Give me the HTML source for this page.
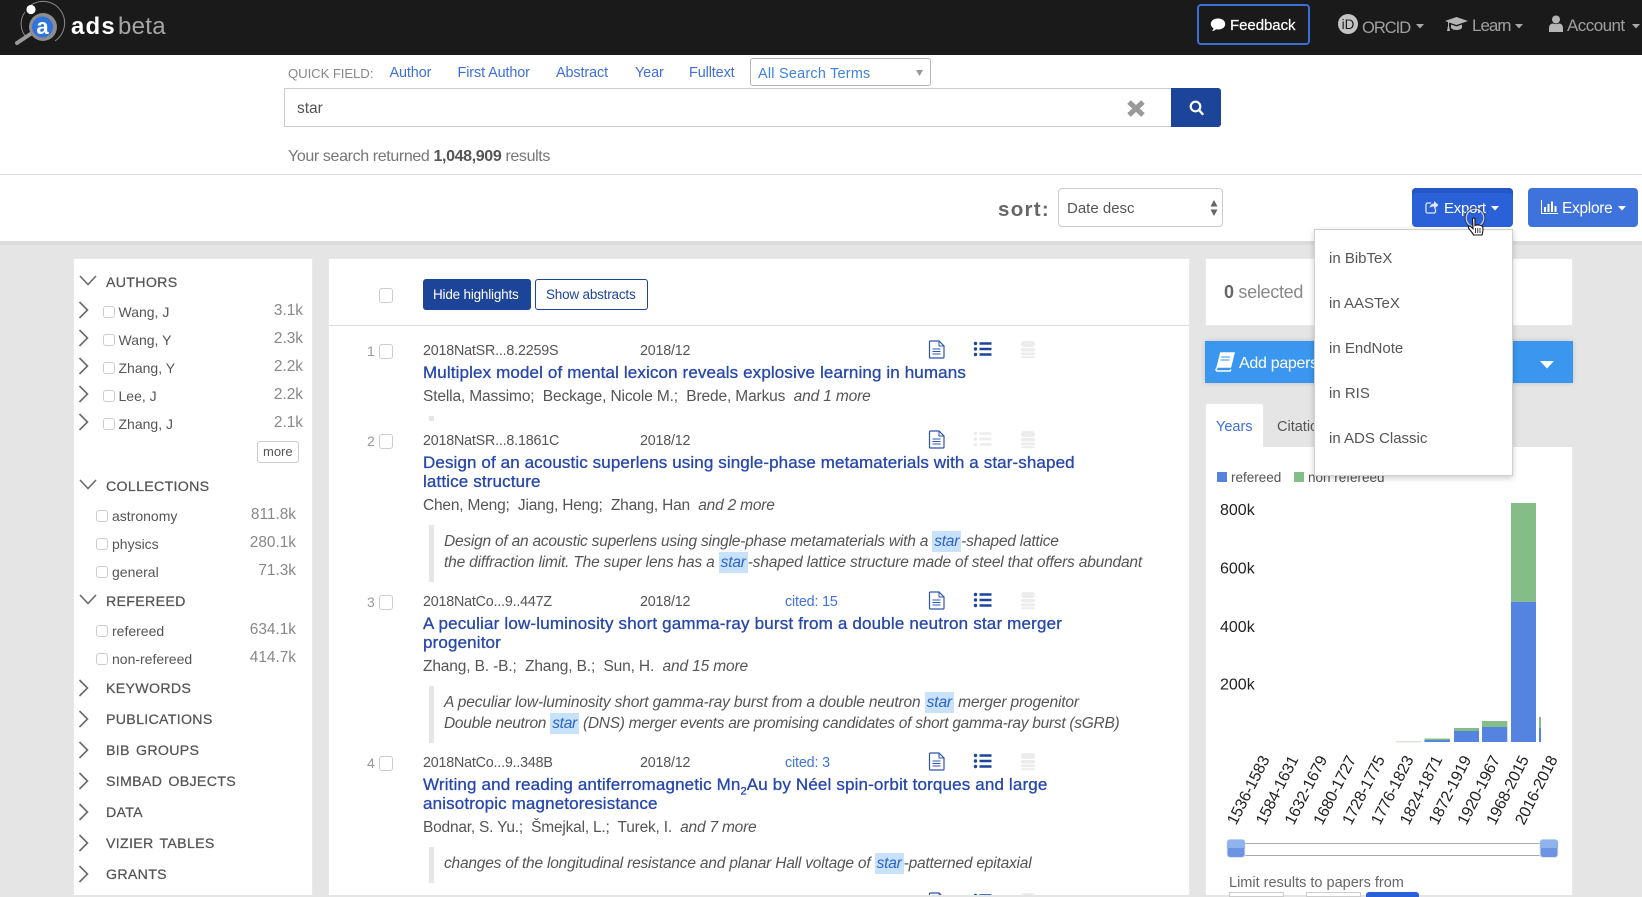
<!DOCTYPE html>
<html lang="en"><head><meta charset="utf-8"><title>ads beta</title>
<style>
html,body{margin:0;padding:0}
body{width:1642px;height:895px;overflow:hidden;position:relative;background:#e5e5e5;font-family:"Liberation Sans",Arial,sans-serif;color:#555;font-size:15px}
.b,.t,svg.a{position:absolute}
.b{box-sizing:border-box}
.t{white-space:nowrap;line-height:20px}
.cb{position:absolute;box-sizing:border-box;width:12px;height:12px;border:1px solid #ccc;border-radius:3px;background:#fff}
.cm{width:14px;height:15px}
.h{color:#555;font-size:14.2px;letter-spacing:.3px;word-spacing:2px;-webkit-text-stroke:.25px #555}
.n{color:#555;font-size:14px}
.c{color:#888;font-size:15.4px;text-align:right}
.id{font-size:14.3px;letter-spacing:-.2px;color:#555}
.ti{font-size:17px;color:#2647ab;letter-spacing:.14px;-webkit-text-stroke:.3px #2647ab}
.au{font-size:15.5px;color:#555;letter-spacing:-.14px}
.ab{font-size:15.5px;color:#555;font-style:italic;letter-spacing:-.22px;line-height:21px}
.hl{display:inline-block;line-height:20px;padding:1px 2px 0;background:#c8e3f9;color:#2d62c8}
.bar{position:absolute;left:429px;width:5px;background:#e6e6e6}
.cit{font-size:14.3px;color:#3f73d8;letter-spacing:-.15px}
.q{font-size:14.4px;color:#3d6fd8;letter-spacing:-.1px}
.dd{font-size:15px;color:#555;left:1329px}
</style></head><body>

<!-- top bar -->
<div class="b" style="left:0;top:0;width:1642px;height:55px;background:#1a1a1a"></div>
<svg class="a" style="left:0;top:0" width="70" height="55" viewBox="0 0 70 55">
<path d="M31 5A20 20 0 0 1 55 41" fill="none" stroke="#8a8a8a" stroke-width="1"/>
<path d="M27 38A20 20 0 0 1 25 12" fill="none" stroke="#8a8a8a" stroke-width="1"/>
<line x1="17" y1="43" x2="32" y2="33" stroke="#9a9a9a" stroke-width="4" stroke-linecap="round"/>
<circle cx="43" cy="27" r="14" fill="#8d8d8d"/>
<circle cx="42.5" cy="27" r="10.5" fill="#2f73dc"/>
<circle cx="31" cy="9.5" r="4.6" fill="#fff"/>
<text x="42.5" y="34" font-family="Liberation Sans" font-weight="700" font-size="22" fill="#fff" text-anchor="middle">a</text>
</svg>
<div class="t" style="left:71px;top:12px;font-size:24px;line-height:30px;color:#fff;font-weight:700;letter-spacing:1.2px">ads</div>
<div class="t" style="left:118px;top:12px;font-size:24px;line-height:30px;color:#a6a6a6;letter-spacing:.3px">beta</div>

<div class="b" style="left:1197px;top:4px;width:113px;height:41px;border:2px solid #3a6fd8;border-radius:4px"></div>
<svg class="a" style="left:1210px;top:17px" width="16" height="16" viewBox="0 0 16 16"><path d="M8 1.5C3.8 1.5.8 3.8.8 7c0 1.9 1.1 3.4 2.7 4.400-.2 1-.8 2-1.5 2.800 1.600-.2 3-.9 4-1.900.6.1 1.300.2 2 .2 4.200 0 7.200-2.300 7.200-5.500S12.200 1.500 8 1.500z" fill="#fff"/></svg>
<div class="t" style="left:1230px;top:16px;font-size:15px;color:#fff;-webkit-text-stroke:.2px #fff;letter-spacing:-.05px">Feedback</div>

<svg class="a" style="left:1338px;top:14px" width="20" height="20" viewBox="0 0 20 20"><circle cx="10" cy="10" r="10" fill="#c4c4c4"/><text x="10" y="15" font-family="Liberation Sans" font-size="13.5" fill="#1a1a1a" text-anchor="middle">iD</text></svg>
<div class="t" style="left:1362px;top:18px;font-size:16.5px;color:#a0a0a0;letter-spacing:-1px">ORCID</div>
<svg class="a" style="left:1416px;top:24px" width="8" height="5"><path d="M0 0h8L4 4.5z" fill="#a8a8a8"/></svg>
<svg class="a" style="left:1445px;top:16px" width="23" height="17" viewBox="0 0 23 17"><path d="M11.5 1 23 5 11.5 9 4 6.5V10l1 5H2l1-5V6L0 5zM6 8.500l5.500 2 5.500-2V12c-1.500 1.500-3.500 2-5.500 2S7.500 13.500 6 12z" fill="#b5b5b5"/></svg>
<div class="t" style="left:1472px;top:16px;font-size:17px;color:#a0a0a0;letter-spacing:-1px">Learn</div>
<svg class="a" style="left:1515px;top:24px" width="8" height="5"><path d="M0 0h8L4 4.5z" fill="#a8a8a8"/></svg>
<svg class="a" style="left:1549px;top:15px" width="14" height="17" viewBox="0 0 14 17"><circle cx="7" cy="4.5" r="4" fill="#b5b5b5"/><path d="M0 17v-4c0-3 2-4.500 4-4.500 1 .8 5 .8 6 0 2 0 4 1.500 4 4.500v4z" fill="#b5b5b5"/></svg>
<div class="t" style="left:1567px;top:16px;font-size:17px;color:#a0a0a0;letter-spacing:-.55px">Account</div>
<svg class="a" style="left:1632px;top:24px" width="8" height="5"><path d="M0 0h8L4 4.5z" fill="#a8a8a8"/></svg>

<!-- search area -->
<div class="b" style="left:0;top:55px;width:1642px;height:186px;background:#fff"></div>
<div class="b" style="left:0;top:174px;width:1642px;height:1px;background:#ddd"></div>
<div class="b" style="left:0;top:241px;width:1642px;height:4px;background:#dcdcdc"></div>

<div class="t" style="left:288px;top:64px;font-size:13.2px;color:#888;letter-spacing:-.1px">QUICK FIELD:</div>
<div class="t q" style="left:389.5px;top:63px">Author</div>
<div class="t q" style="left:457.5px;top:63px">First Author</div>
<div class="t q" style="left:556px;top:63px">Abstract</div>
<div class="t q" style="left:635px;top:63px">Year</div>
<div class="t q" style="left:689px;top:63px">Fulltext</div>
<div class="b" style="left:750px;top:58px;width:181px;height:28px;border:1px solid #b5b5b5;border-radius:3px;background:#fff"></div>
<div class="t" style="left:758px;top:64px;font-size:14.4px;color:#3d82e0;letter-spacing:.25px">All Search Terms</div>
<svg class="a" style="left:916px;top:70px" width="7" height="6"><path d="M0 0h7L3.5 6z" fill="#999"/></svg>

<div class="b" style="left:284px;top:88px;width:888px;height:39px;border:1px solid #ccc;background:#fff"></div>
<div class="t" style="left:297px;top:99px;font-size:15.5px;color:#555">star</div>
<svg class="a" style="left:1126px;top:99px" width="20" height="19" viewBox="0 0 20 19"><path d="M3 3l14 13M17 3 3 16" stroke="#999" stroke-width="5"/></svg>
<div class="b" style="left:1171px;top:88px;width:50px;height:39px;background:#1c4599;border-radius:0 3px 3px 0"></div>
<svg class="a" style="left:1189px;top:100px" width="15" height="16" viewBox="0 0 15 16"><circle cx="6.5" cy="6.5" r="4.8" fill="none" stroke="#fff" stroke-width="2.2"/><path d="M10 10l3.500 4" stroke="#fff" stroke-width="2.4" stroke-linecap="round"/></svg>

<div class="t" style="left:288px;top:146.5px;font-size:16px;color:#777;letter-spacing:-.37px">Your search returned <b style="color:#555">1,048,909</b> results</div>

<div class="t" style="left:998px;top:199.5px;font-size:20.5px;font-weight:700;color:#666;letter-spacing:1.3px">sort:</div>
<div class="b" style="left:1058px;top:188px;width:165px;height:39px;border:1px solid #ccc;border-radius:4px;background:#fff"></div>
<div class="t" style="left:1067px;top:199px;font-size:15px;color:#555">Date desc</div>
<svg class="a" style="left:1210px;top:200px" width="8" height="16"><path d="M4 0l3.500 6.500h-7zM4 16 .5 9.500h7z" fill="#666"/></svg>

<div class="b" style="left:1412px;top:188px;width:101px;height:39px;background:#2a60d8;border-radius:4px;box-shadow:inset 0 5px 0 #2657c6"></div>
<svg class="a" style="left:1425px;top:200px" width="14" height="14" viewBox="0 0 14 14"><path d="M10.5 8.500v3a1.500 1.500 0 0 1-1.500 1.500H2.500A1.500 1.500 0 0 1 1 11.500V4.500A1.500 1.500 0 0 1 2.500 3H6" fill="none" stroke="#dfe8fb" stroke-width="1.3"/><path d="M4.500 8C5 5 7 3.500 9 3.500V1l4.500 4L9 9V6.500C7 6.500 5.500 7 4.500 8z" fill="#dfe8fb"/></svg>
<div class="t" style="left:1444px;top:199px;font-size:15px;color:#fff;letter-spacing:-.25px">Export</div>
<svg class="a" style="left:1491px;top:206px" width="8" height="5"><path d="M0 0h8L4 4.5z" fill="#fff"/></svg>

<div class="b" style="left:1528px;top:188px;width:110px;height:39px;background:#3f73dc;border-radius:4px"></div>
<svg class="a" style="left:1541px;top:200px" width="17" height="14" viewBox="0 0 17 14"><path d="M.5 0v13.500H17" fill="none" stroke="#fff" stroke-width="1"/><path d="M3 7h2v5H3zM6.500 4h2v8h-2zM10 1.500h2V12h-2zM13.500 6h2v6h-2z" fill="#fff"/></svg>
<div class="t" style="left:1562px;top:199px;font-size:15.4px;color:#fff;letter-spacing:-.25px">Explore</div>
<svg class="a" style="left:1618px;top:206px" width="8" height="5"><path d="M0 0h8L4 4.5z" fill="#fff"/></svg>

<!-- left panel -->
<div class="b" style="left:73px;top:258px;width:240px;height:637px;background:#fff;border:1px solid #e8e8e8;border-bottom:0"></div>
<svg class="a" style="left:0;top:0" width="100" height="895" viewBox="0 0 100 895" fill="none" stroke="#6a6a6a" stroke-width="1.6">
<path d="M80 276l8 8.500 8-8.500M80 480l8 8.500 8-8.500M80 595l8 8.500 8-8.500"/>
<path d="M79.500 302l8 8-8 8M79.500 330l8 8-8 8M79.500 358l8 8-8 8M79.500 386l8 8-8 8M79.500 414l8 8-8 8"/>
<path d="M79.500 680l8 8-8 8M79.500 711l8 8-8 8M79.500 742l8 8-8 8M79.500 773l8 8-8 8M79.500 804l8 8-8 8M79.500 835l8 8-8 8M79.500 866l8 8-8 8"/>
</svg>

<div class="t h" style="left:106px;top:273px">AUTHORS</div>
<div class="cb" style="left:103px;top:306px"></div><div class="t n" style="left:118.5px;top:302px">Wang, J</div><div class="t c" style="right:1339px;top:301px">3.1k</div>
<div class="cb" style="left:103px;top:334px"></div><div class="t n" style="left:118.5px;top:330px">Wang, Y</div><div class="t c" style="right:1339px;top:329px">2.3k</div>
<div class="cb" style="left:103px;top:362px"></div><div class="t n" style="left:118.5px;top:358px">Zhang, Y</div><div class="t c" style="right:1339px;top:357px">2.2k</div>
<div class="cb" style="left:103px;top:390px"></div><div class="t n" style="left:118.5px;top:386px">Lee, J</div><div class="t c" style="right:1339px;top:385px">2.2k</div>
<div class="cb" style="left:103px;top:418px"></div><div class="t n" style="left:118.5px;top:414px">Zhang, J</div><div class="t c" style="right:1339px;top:413px">2.1k</div>
<div class="b" style="left:257px;top:441px;width:42px;height:22px;border:1px solid #ccc;border-radius:3px;background:#fff"></div>
<div class="t" style="left:263px;top:442px;font-size:13px;color:#555">more</div>

<div class="t h" style="left:106px;top:477px">COLLECTIONS</div>
<div class="cb" style="left:96px;top:510px"></div><div class="t n" style="left:112px;top:506px">astronomy</div><div class="t c" style="right:1346px;top:505px">811.8k</div>
<div class="cb" style="left:96px;top:538px"></div><div class="t n" style="left:112px;top:534px">physics</div><div class="t c" style="right:1346px;top:533px">280.1k</div>
<div class="cb" style="left:96px;top:566px"></div><div class="t n" style="left:112px;top:562px">general</div><div class="t c" style="right:1346px;top:561px">71.3k</div>

<div class="t h" style="left:106px;top:592px">REFEREED</div>
<div class="cb" style="left:96px;top:625px"></div><div class="t n" style="left:112px;top:621px">refereed</div><div class="t c" style="right:1346px;top:620px">634.1k</div>
<div class="cb" style="left:96px;top:653px"></div><div class="t n" style="left:112px;top:649px">non-refereed</div><div class="t c" style="right:1346px;top:648px">414.7k</div>

<div class="t h" style="left:106px;top:679px">KEYWORDS</div>
<div class="t h" style="left:106px;top:710px">PUBLICATIONS</div>
<div class="t h" style="left:106px;top:741px">BIB GROUPS</div>
<div class="t h" style="left:106px;top:772px">SIMBAD OBJECTS</div>
<div class="t h" style="left:106px;top:803px">DATA</div>
<div class="t h" style="left:106px;top:834px">VIZIER TABLES</div>
<div class="t h" style="left:106px;top:865px">GRANTS</div>

<!-- middle panel -->
<div class="b" style="left:328px;top:258px;width:862px;height:637px;background:#fff;border:1px solid #e8e8e8;border-bottom:0"></div>
<div class="b" style="left:329px;top:325px;width:860px;height:1px;background:#ddd"></div>
<div class="cb cm" style="left:379px;top:288px"></div>
<div class="b" style="left:423px;top:279px;width:108px;height:31px;background:#1c4599;border-radius:3px"></div>
<div class="t" style="left:433px;top:285px;font-size:13.5px;color:#fff;letter-spacing:-.2px">Hide highlights</div>
<div class="b" style="left:535px;top:279px;width:113px;height:31px;border:1px solid #1c4599;border-radius:3px;background:#fff"></div>
<div class="t" style="left:546px;top:285px;font-size:13.5px;color:#1c4599;letter-spacing:-.2px">Show abstracts</div>

<!-- row 1 -->
<div class="t" style="left:367px;top:341px;font-size:14px;color:#999">1</div><div class="cb cm" style="left:379px;top:344px"></div>
<div class="t id" style="left:423px;top:341px">2018NatSR...8.2259S</div>
<div class="t id" style="left:640px;top:341px">2018/12</div>
<div class="t ti" style="left:423px;top:363px;letter-spacing:.13px">Multiplex model of mental lexicon reveals explosive learning in humans</div>
<div class="t au" style="left:423px;top:387px">Stella, Massimo;&nbsp; Beckage, Nicole M.;&nbsp; Brede, Markus &nbsp;<i>and 1 more</i></div>
<div class="b" style="left:429px;top:416px;width:5px;height:5px;background:#e6e6e6"></div>

<!-- row 2 -->
<div class="t" style="left:367px;top:431px;font-size:14px;color:#999">2</div><div class="cb cm" style="left:379px;top:434px"></div>
<div class="t id" style="left:423px;top:431px">2018NatSR...8.1861C</div>
<div class="t id" style="left:640px;top:431px">2018/12</div>
<div class="t ti" style="left:423px;top:453px;letter-spacing:.11px">Design of an acoustic superlens using single-phase metamaterials with a star-shaped</div>
<div class="t ti" style="left:423px;top:472px">lattice structure</div>
<div class="t au" style="left:423px;top:496px;letter-spacing:-.19px">Chen, Meng;&nbsp; Jiang, Heng;&nbsp; Zhang, Han &nbsp;<i>and 2 more</i></div>
<div class="bar" style="top:525px;height:57px"></div>
<div class="t ab" style="left:444px;top:531px">Design of an acoustic superlens using single-phase metamaterials with a <span class="hl">star</span>-shaped lattice</div>
<div class="t ab" style="left:444px;top:552px;letter-spacing:-.18px">the diffraction limit. The super lens has a <span class="hl">star</span>-shaped lattice structure made of steel that offers abundant</div>

<!-- row 3 -->
<div class="t" style="left:367px;top:592px;font-size:14px;color:#999">3</div><div class="cb cm" style="left:379px;top:595px"></div>
<div class="t id" style="left:423px;top:592px">2018NatCo...9..447Z</div>
<div class="t id" style="left:640px;top:592px">2018/12</div>
<div class="t cit" style="left:785px;top:592px">cited: 15</div>
<div class="t ti" style="left:423px;top:614px;letter-spacing:.18px">A peculiar low-luminosity short gamma-ray burst from a double neutron star merger</div>
<div class="t ti" style="left:423px;top:633px">progenitor</div>
<div class="t au" style="left:423px;top:657px">Zhang, B. -B.;&nbsp; Zhang, B.;&nbsp; Sun, H. &nbsp;<i>and 15 more</i></div>
<div class="bar" style="top:686px;height:57px"></div>
<div class="t ab" style="left:444px;top:692px;letter-spacing:-.14px">A peculiar low-luminosity short gamma-ray burst from a double neutron <span class="hl">star</span> merger progenitor</div>
<div class="t ab" style="left:444px;top:713px;letter-spacing:-.275px">Double neutron <span class="hl">star</span> (DNS) merger events are promising candidates of short gamma-ray burst (sGRB)</div>

<!-- row 4 -->
<div class="t" style="left:367px;top:753px;font-size:14px;color:#999">4</div><div class="cb cm" style="left:379px;top:756px"></div>
<div class="t id" style="left:423px;top:753px">2018NatCo...9..348B</div>
<div class="t id" style="left:640px;top:753px">2018/12</div>
<div class="t cit" style="left:785px;top:753px">cited: 3</div>
<div class="t ti" style="left:423px;top:775px;letter-spacing:.15px">Writing and reading antiferromagnetic Mn<sub style="font-size:11px;line-height:0">2</sub>Au by Néel spin-orbit torques and large</div>
<div class="t ti" style="left:423px;top:794px">anisotropic magnetoresistance</div>
<div class="t au" style="left:423px;top:818px;letter-spacing:-.21px">Bodnar, S. Yu.;&nbsp; Šmejkal, L.;&nbsp; Turek, I. &nbsp;<i>and 7 more</i></div>
<div class="bar" style="top:847px;height:36px"></div>
<div class="t ab" style="left:444px;top:853px;letter-spacing:-.2px">changes of the longitudinal resistance and planar Hall voltage of <span class="hl">star</span>-patterned epitaxial</div>

<!-- result icons -->
<svg class="a" style="left:920px;top:330px" width="125" height="565" viewBox="0 0 125 565">
<defs>
<g id="doc"><path d="M10.5 11h8.500l5 5V27a1 1 0 0 1-1 1H10.500a1 1 0 0 1-1-1V12a1 1 0 0 1 1-1z" fill="#fff" stroke="#2f55ae" stroke-width="1.2"/><path d="M19 11v5h5" fill="none" stroke="#2f55ae" stroke-width="1"/><path d="M12.500 19h8M12.500 21.500h8M12.500 24h8" stroke="#2f55ae" stroke-width="1"/></g>
<g id="lst"><path d="M59.500 13.500h12M59.500 19h12M59.500 24.500h12" stroke-width="2.6" fill="none"/><circle cx="55.500" cy="13.500" r="1.7" stroke="none"/><circle cx="55.500" cy="19" r="1.7" stroke="none"/><circle cx="55.500" cy="24.500" r="1.7" stroke="none"/></g>
<g id="db" fill="#ececec"><rect x="101" y="11" width="14" height="6" rx="3"/><rect x="101" y="18" width="14" height="3.5" rx="1.7"/><rect x="101" y="22.500" width="14" height="2.8" rx="1.4"/><rect x="101" y="26.200" width="14" height="2" rx="1"/></g>
</defs>
<use href="#doc"/><use href="#lst" fill="#1c4599" stroke="#1c4599"/><use href="#db"/>
<use href="#doc" y="90"/><use href="#lst" y="90" fill="#ececec" stroke="#ececec"/><use href="#db" y="90"/>
<use href="#doc" y="251"/><use href="#lst" y="251" fill="#1c4599" stroke="#1c4599"/><use href="#db" y="251"/>
<use href="#doc" y="412"/><use href="#lst" y="412" fill="#1c4599" stroke="#1c4599"/><use href="#db" y="412"/>
<use href="#doc" y="552"/><use href="#lst" y="552" fill="#1c4599" stroke="#1c4599"/><use href="#db" y="552"/>
</svg>

<!-- right column -->
<div class="b" style="left:1205px;top:258px;width:368px;height:68px;background:#fff;border:1px solid #e8e8e8"></div>
<div class="t" style="left:1224px;top:282px;font-size:18px;color:#888;letter-spacing:-.3px"><b style="color:#666">0</b> selected</div>

<div class="b" style="left:1205px;top:341px;width:368px;height:42px;background:#3a96ee;box-shadow:0 0 5px rgba(0,0,0,.15)"></div>
<svg class="a" style="left:1215px;top:352px" width="20" height="20" viewBox="0 0 20 20"><path d="M5 1h14l-3.500 14H2.500L1 17.500c0 1 .8 1.500 1.500 1.500H15l1-1.500" fill="none" stroke="#fff" stroke-width="1.5"/><path d="M5 1h14l-3.500 14H1.500z" fill="#fff"/><path d="M6 5h9M5.500 8h9" stroke="#3a96ee" stroke-width="1"/></svg>
<div class="t" style="left:1239px;top:354px;font-size:16px;color:#fff;letter-spacing:-.3px">Add papers</div>
<svg class="a" style="left:1540px;top:361px" width="14" height="8"><path d="M0 0h14L7 7.500z" fill="#fff"/></svg>

<div class="b" style="left:1205px;top:447px;width:368px;height:448px;background:#fff;border:1px solid #e8e8e8;border-bottom:0;border-top:0"></div>
<div class="b" style="left:1205px;top:403px;width:59px;height:44px;background:#fff;border:1px solid #e8e8e8;border-bottom:0;border-radius:3px 3px 0 0"></div>
<div class="t" style="left:1216px;top:417px;font-size:14.5px;color:#3d6fd8">Years</div>
<div class="t" style="left:1277px;top:417px;font-size:14.5px;color:#555">Citations</div>

<div class="b" style="left:1217px;top:472px;width:10px;height:10px;background:#5583e0"></div>
<div class="t" style="left:1231px;top:468px;font-size:13.5px;color:#555">refereed</div>
<div class="b" style="left:1294px;top:472px;width:10px;height:10px;background:#85bd88"></div>
<div class="t" style="left:1308px;top:468px;font-size:13.5px;color:#555">non refereed</div>

<svg class="a" style="left:1205px;top:480px" width="368" height="415" viewBox="1205 480 368 415" font-family="Liberation Sans">
<g font-size="16" fill="#222"><text x="1220" y="515">800k</text><text x="1220" y="573.5">600k</text><text x="1220" y="632">400k</text><text x="1220" y="689.5">200k</text></g>
<g fill="#5583e0"><rect x="1511" y="601.7" width="25" height="140.3"/><rect x="1482" y="727" width="25.3" height="15"/><rect x="1454" y="731" width="25" height="11"/><rect x="1424.5" y="740" width="25.5" height="2"/><rect x="1539" y="728" width="2" height="14"/></g>
<g fill="#85bd88"><rect x="1511" y="503" width="25" height="98.7"/><rect x="1482" y="721" width="25.3" height="6"/><rect x="1454" y="728" width="25" height="3"/><rect x="1424.5" y="738.5" width="25.5" height="1.5"/><rect x="1539" y="717" width="2" height="11"/><rect x="1396" y="741.3" width="25" height="1" opacity=".5"/></g>
<g font-size="16" fill="#222" text-anchor="end" letter-spacing="-.2">
<text transform="translate(1265.5 757) rotate(-63)" dy="5">1536-1583</text>
<text transform="translate(1294.3 757) rotate(-63)" dy="5">1584-1631</text>
<text transform="translate(1323.1 757) rotate(-63)" dy="5">1632-1679</text>
<text transform="translate(1351.9 757) rotate(-63)" dy="5">1680-1727</text>
<text transform="translate(1380.7 757) rotate(-63)" dy="5">1728-1775</text>
<text transform="translate(1409.5 757) rotate(-63)" dy="5">1776-1823</text>
<text transform="translate(1438.3 757) rotate(-63)" dy="5">1824-1871</text>
<text transform="translate(1467.1 757) rotate(-63)" dy="5">1872-1919</text>
<text transform="translate(1495.9 757) rotate(-63)" dy="5">1920-1967</text>
<text transform="translate(1524.7 757) rotate(-63)" dy="5">1968-2015</text>
<text transform="translate(1553.5 757) rotate(-63)" dy="5">2016-2018</text>
</g>
<rect x="1236" y="843.5" width="312" height="12" fill="#fff" stroke="#aaa" stroke-width="1"/>
<g><rect x="1227" y="839.5" width="18" height="18" rx="3" fill="#6d93e3" stroke="#e3e9f5"/><path d="M1227 848v-5.500a3 3 0 0 1 3-3h12a3 3 0 0 1 3 3v5.500z" fill="#8fb3ec"/><rect x="1540" y="839.5" width="18" height="18" rx="3" fill="#6d93e3" stroke="#e3e9f5"/><path d="M1540 848v-5.500a3 3 0 0 1 3-3h12a3 3 0 0 1 3 3v5.500z" fill="#8fb3ec"/></g>
</svg>
<div class="t" style="left:1229px;top:873px;font-size:14.5px;color:#666">Limit results to papers from</div>
<div class="b" style="left:1229px;top:892px;width:55px;height:5px;border:1px solid #ccc;background:#fff"></div>
<div class="b" style="left:1306px;top:892px;width:55px;height:5px;border:1px solid #ccc;background:#fff"></div>
<div class="b" style="left:1366px;top:892px;width:53px;height:5px;background:#2a60d8;border-radius:3px 3px 0 0"></div>

<!-- dropdown -->
<div class="b" style="left:1314px;top:229px;width:199px;height:247px;background:#fff;border:1px solid #d0d0d0;box-shadow:0 2px 6px rgba(0,0,0,.2)"></div>
<div class="t dd" style="top:249px">in BibTeX</div>
<div class="t dd" style="top:294px">in AASTeX</div>
<div class="t dd" style="top:339px">in EndNote</div>
<div class="t dd" style="top:384px">in RIS</div>
<div class="t dd" style="top:429px">in ADS Classic</div>

<!-- cursor -->
<svg class="a" style="left:1460px;top:204px" width="30" height="38" viewBox="0 0 30 38">
<circle cx="15" cy="14" r="10" fill="none" stroke="#333" stroke-width="1" opacity=".8"/>
<circle cx="15" cy="14" r="8.8" fill="none" stroke="#eee" stroke-width="1.2" opacity=".8"/>
<g transform="translate(1 2)">
<path d="M11.5 13.5c0-2 2.5-2 2.5 0v6c1-.8 6.500-.8 7.500 1 .7 1.500.5 5-.5 8.500h-8.500c-1-2.500-4-5-5-7-.5-1.500 1-2.500 2.200-1.500l2.300 2.200z" fill="#fff" stroke="#111" stroke-width="1.1"/>
<path d="M14.5 22v5M16.800 22v5M19 22v5" stroke="#111" stroke-width=".8"/>
</g>
</svg>
</body></html>
